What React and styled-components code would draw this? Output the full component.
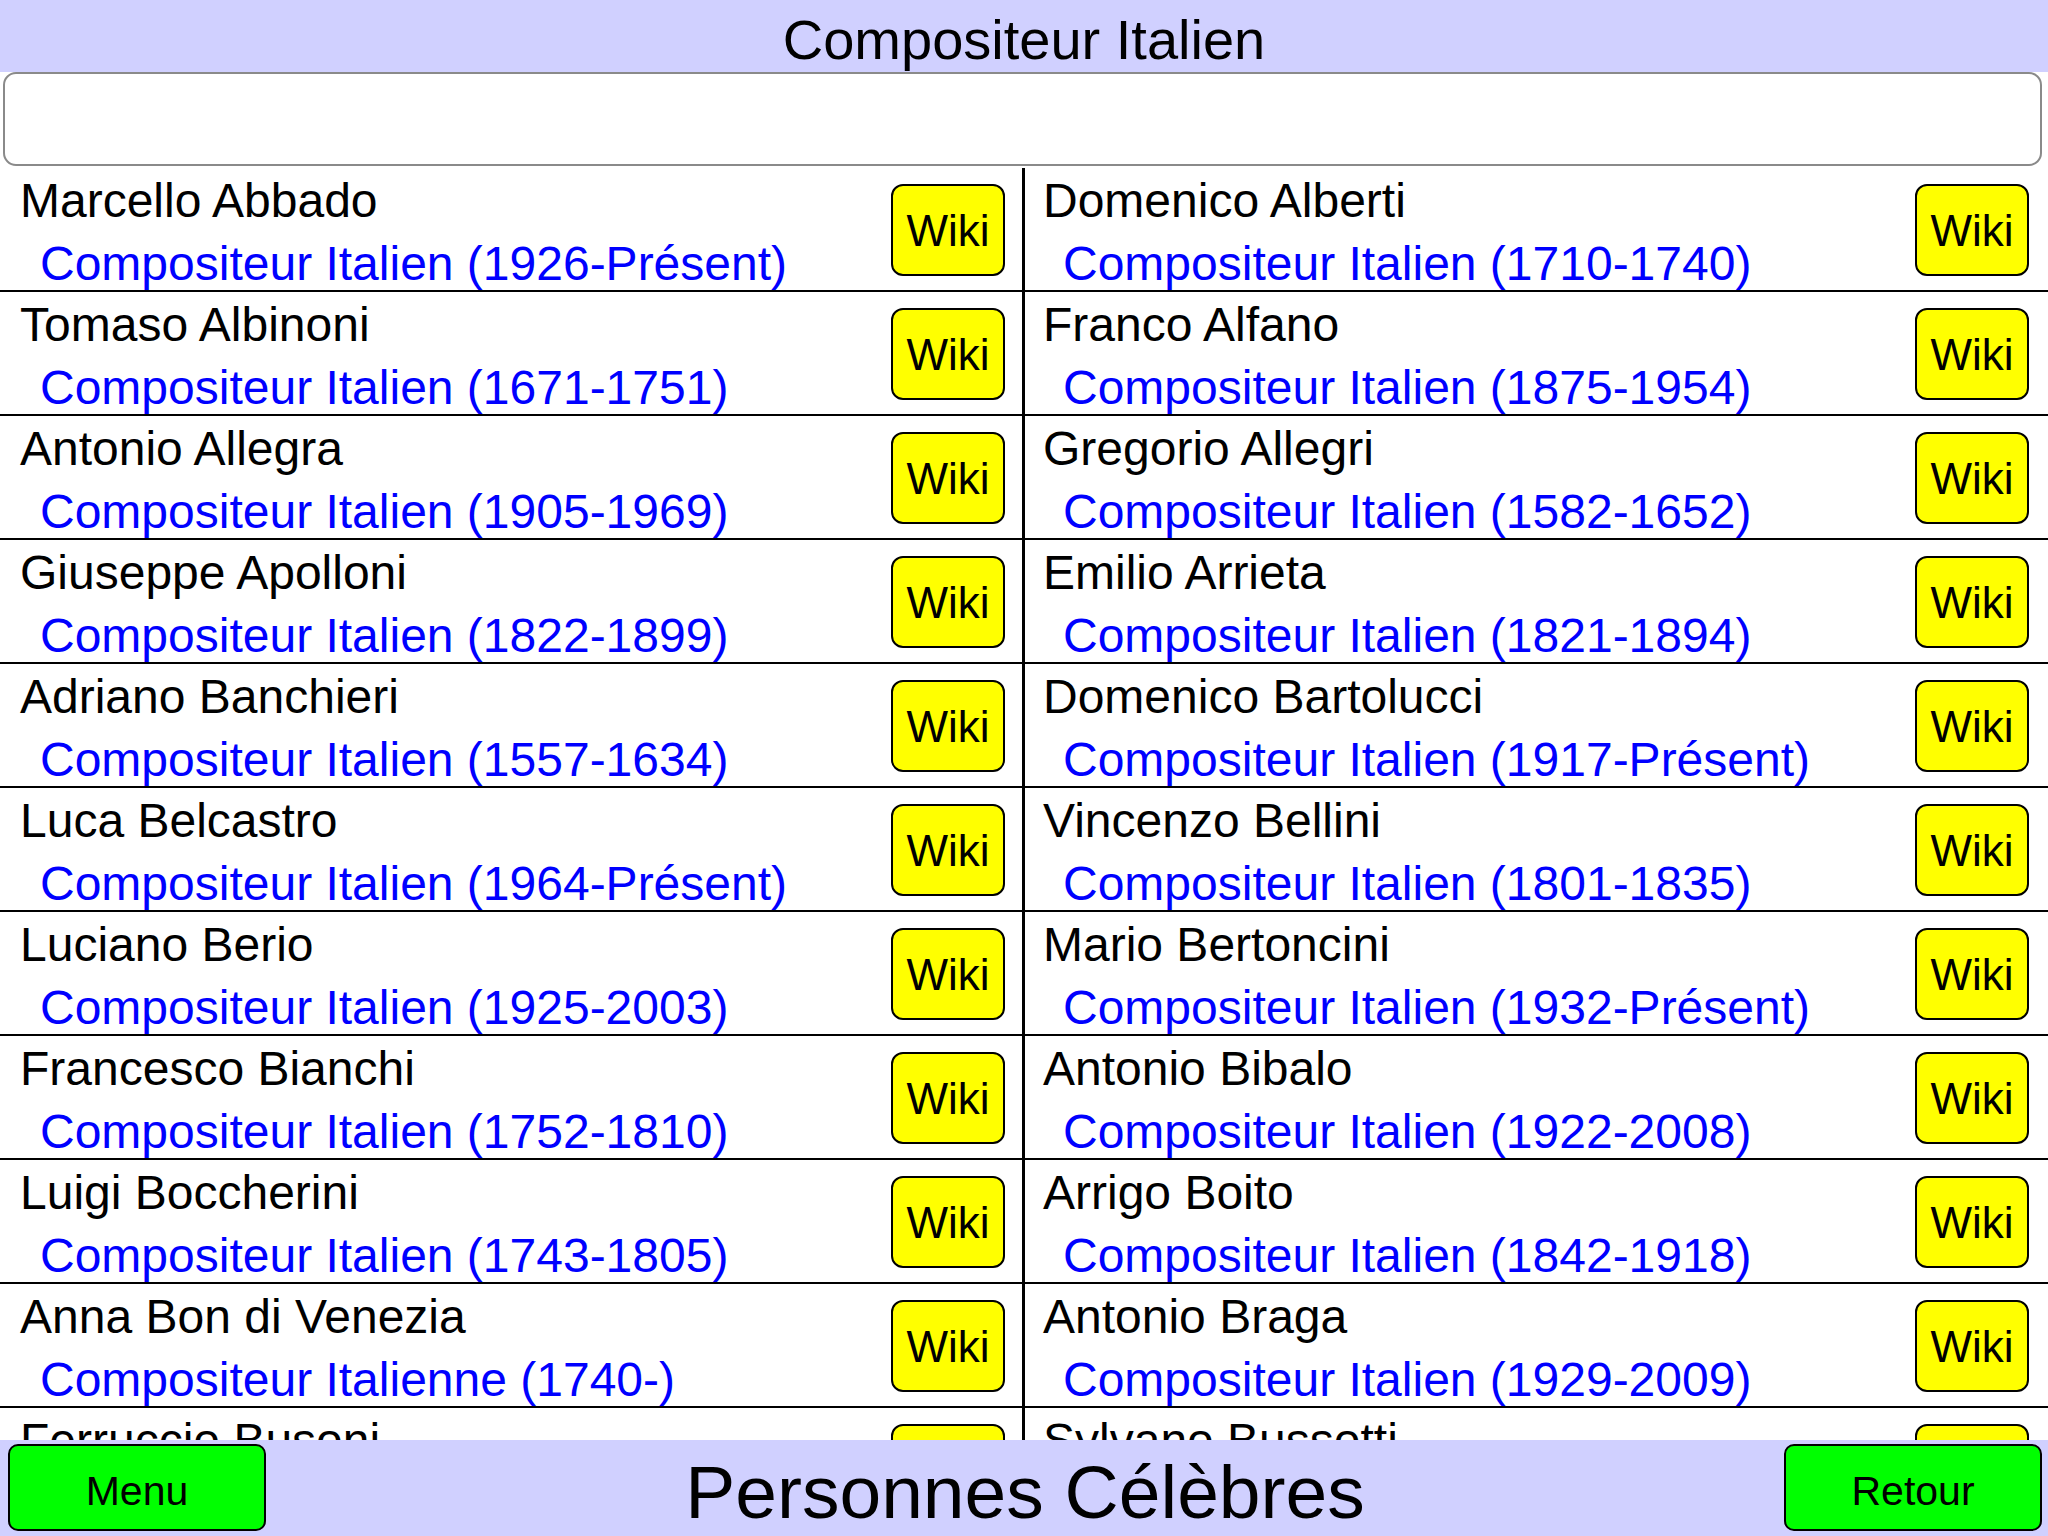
import React from 'react';
import styled, { createGlobalStyle } from 'styled-components';

const GlobalStyle = createGlobalStyle`
  html, body {
    margin: 0;
    padding: 0;
    background: #ffffff;
    overflow: hidden;
  }
  body {
    font-family: "Liberation Sans", Arial, Helvetica, sans-serif;
  }
`;

const Screen = styled.div`
  width: 2048px;
  height: 1536px;
  display: flex;
  flex-direction: column;
  background: #ffffff;
  overflow: hidden;
`;

const TopBar = styled.header`
  height: 72px;
  box-sizing: border-box;
  padding-top: 9px;
  background: #d0d0ff;
  text-align: center;
  font-size: 56px;
  line-height: 62px;
  color: #000;
`;

const SearchWrap = styled.div`
  height: 96px;
  box-sizing: border-box;
  padding: 0 6px 2px 3px;
`;

const SearchInput = styled.input`
  display: block;
  width: 100%;
  height: 94px;
  box-sizing: border-box;
  border: 2px solid #8a8a8a;
  border-radius: 13px;
  background: #fff;
  font-family: inherit;
  font-size: 40px;
  padding: 0 20px;
  outline: none;
`;

const List = styled.div`
  flex: 1;
  display: grid;
  grid-template-columns: 1024px 1024px;
  overflow: hidden;
`;

const Column = styled.div`
  display: flex;
  flex-direction: column;
  box-shadow: ${p => (p.side === 'left' ? 'inset -2px 0 0 #000' : 'inset 1px 0 0 #000')};
`;

const Row = styled.div`
  flex: none;
  height: 124px;
  box-sizing: border-box;
  border-bottom: 2px solid #000;
  display: flex;
  align-items: flex-start;
  justify-content: space-between;
  padding: 0 19px 0 ${p => (p.side === 'left' ? '20px' : '19px')};
`;

const Texts = styled.div`
  padding-top: 3px;
  white-space: nowrap;
`;

const Name = styled.div`
  font-size: 48px;
  line-height: 60px;
  color: #000;
`;

const Detail = styled.div`
  margin-top: 7px;
  padding-left: 20px;
  font-size: 48px;
  line-height: 52px;
  color: #0000ff;
`;

const WikiButton = styled.button`
  flex: none;
  margin-top: 16px;
  width: 114px;
  height: 92px;
  box-sizing: border-box;
  border: 2px solid #000;
  border-radius: 12px;
  background: #ffff00;
  color: #000;
  font-family: inherit;
  font-size: 44px;
  padding: 2px 0 0;
  cursor: pointer;
`;

const BottomBar = styled.footer`
  height: 96px;
  box-sizing: border-box;
  padding: 4px 6px 0 8px;
  background: #d0d0ff;
  display: grid;
  grid-template-columns: 258px 1fr 258px;
  align-items: start;
  position: relative;
  z-index: 1;
`;

const NavButton = styled.button`
  height: 87px;
  width: 258px;
  box-sizing: border-box;
  border: 2px solid #000;
  border-radius: 10px;
  background: #00ff00;
  color: #000;
  font-family: inherit;
  font-size: 41px;
  padding: 7px 0 0;
  cursor: pointer;
`;

const AppTitle = styled.div`
  margin-top: 6px;
  text-align: center;
  font-size: 75px;
  line-height: 84px;
  color: #000;
`;

const left = [
  ['Marcello Abbado', 'Compositeur Italien (1926-Présent)'],
  ['Tomaso Albinoni', 'Compositeur Italien (1671-1751)'],
  ['Antonio Allegra', 'Compositeur Italien (1905-1969)'],
  ['Giuseppe Apolloni', 'Compositeur Italien (1822-1899)'],
  ['Adriano Banchieri', 'Compositeur Italien (1557-1634)'],
  ['Luca Belcastro', 'Compositeur Italien (1964-Présent)'],
  ['Luciano Berio', 'Compositeur Italien (1925-2003)'],
  ['Francesco Bianchi', 'Compositeur Italien (1752-1810)'],
  ['Luigi Boccherini', 'Compositeur Italien (1743-1805)'],
  ['Anna Bon di Venezia', 'Compositeur Italienne (1740-)'],
  ['Ferruccio Busoni', 'Compositeur Italien (1866-1924)'],
];

const right = [
  ['Domenico Alberti', 'Compositeur Italien (1710-1740)'],
  ['Franco Alfano', 'Compositeur Italien (1875-1954)'],
  ['Gregorio Allegri', 'Compositeur Italien (1582-1652)'],
  ['Emilio Arrieta', 'Compositeur Italien (1821-1894)'],
  ['Domenico Bartolucci', 'Compositeur Italien (1917-Présent)'],
  ['Vincenzo Bellini', 'Compositeur Italien (1801-1835)'],
  ['Mario Bertoncini', 'Compositeur Italien (1932-Présent)'],
  ['Antonio Bibalo', 'Compositeur Italien (1922-2008)'],
  ['Arrigo Boito', 'Compositeur Italien (1842-1918)'],
  ['Antonio Braga', 'Compositeur Italien (1929-2009)'],
  ['Sylvano Bussotti', 'Compositeur Italien (1931-Présent)'],
];

function PersonColumn({ side, people }) {
  return (
    <Column side={side}>
      {people.map(([name, detail]) => (
        <Row side={side} key={name}>
          <Texts>
            <Name>{name}</Name>
            <Detail>{detail}</Detail>
          </Texts>
          <WikiButton>Wiki</WikiButton>
        </Row>
      ))}
    </Column>
  );
}

export default function App() {
  return (
    <>
      <GlobalStyle />
      <Screen>
        <TopBar>Compositeur Italien</TopBar>
        <SearchWrap>
          <SearchInput type="text" readOnly />
        </SearchWrap>
        <List>
          <PersonColumn side="left" people={left} />
          <PersonColumn side="right" people={right} />
        </List>
        <BottomBar>
          <NavButton>Menu</NavButton>
          <AppTitle>Personnes Célèbres</AppTitle>
          <NavButton>Retour</NavButton>
        </BottomBar>
      </Screen>
    </>
  );
}
